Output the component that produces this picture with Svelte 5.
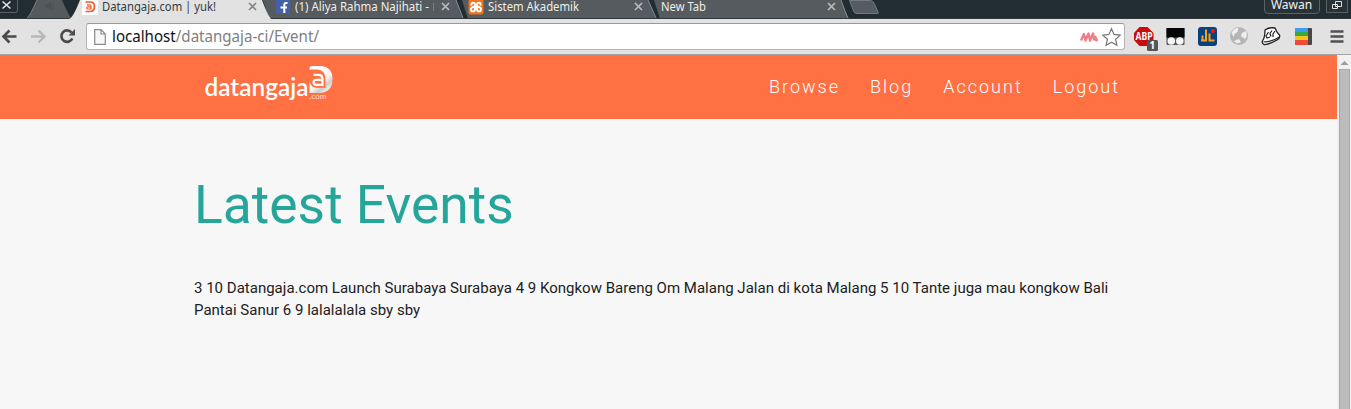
<script>
  const tabs = [
    { title: 'Datangaja.com | yuk!', icon: 'd', active: true, tw: 114 },
    { title: '(1) Aliya Rahma Najihati -', icon: 'f', active: false, tw: 134 },
    { title: 'Sistem Akademik', icon: 'x', active: false, tw: 91 },
    { title: 'New Tab', icon: '', active: false, tw: 45 }
  ];
  const links = ['Browse', 'Blog', 'Account', 'Logout'];
</script>

<div class="window">
  <header class="strip">
    <svg class="shapes" width="1351" height="19" viewBox="0 0 1351 19">
      <rect width="1351" height="19" fill="#222d32" />
      <path d="M-1 12.500H15.500Q17.500 12.500 17.500 10V0" fill="none" stroke="#596267" />
      <path d="M2.500 1.500l8 7m0-7l-8 7" stroke="#e8e8e8" stroke-width="1.500" />
      <path d="M27 18Q30 16 37 0H62Q67 12 71 18Z" fill="#555b5d" />
      <path d="M27 18Q30 16 37 0" fill="none" stroke="#777d80" />
      <path d="M46 5h2l3-3v8l-3-3h-2zM53 3q2 3 0 6" fill="#4d5355" stroke="#4d5355" />
      <path d="M263 0H456L463 19H269Z" fill="#555b5e" />
      <path d="M462 0H648L656 19H468Z" fill="#555b5e" />
      <path d="M654 0H841Q845 12 849 19H660Z" fill="#555b5e" />
      <path d="M456 0l7 18M648 0l8 18M841 0q4 12 7 18" fill="none" stroke="#899093" />
      <path d="M433.500 3v8" stroke="#777d80" />
      <path d="M849.500 .5H870Q873 .5 874 3L878 12Q879 13.500 877 13.500H857Q855 13.500 854 12Z" fill="#555b5e" stroke="#737a7d" />
      <path d="M0 18.500H1351" stroke="#30383b" />
      <path d="M69 19Q73 18 80 0H262Q267 14 271 19Z" fill="#e2e2e2" />
      <path d="M1264.500 0V10Q1264.500 13.500 1268 13.500H1315Q1319.500 13.500 1319.500 10V0" fill="#283237" stroke="#596267" />
      <path d="M1326.500 0V12.500H1347.500V0" fill="#283237" stroke="#596267" />
      <path d="M1335.500 1.500h6v5h-6zM1332.500 4.500h5v4h-5z" fill="none" stroke="#e0e0e0" />
    </svg>
    <div class="tabs">
      {#each tabs as t}
        <div class="tab" class:active={t.active}>
          {#if t.icon === 'd'}
            <svg class="fav" width="16" height="15" viewBox="0 0 16 15">
              <rect width="16" height="15" fill="#fff" />
              <path d="M3.500 2H8Q12.500 2 12.500 6.500Q12.500 11.500 7.500 11.500H3.500" fill="none" stroke="#f0592b" stroke-width="1.700" />
              <path d="M5 4.800H7.500Q9 4.800 9 6.500V9H6.200Q4.800 9 4.800 7.900T6.200 6.900H9" fill="none" stroke="#f0592b" stroke-width="1.200" />
            </svg>
          {:else if t.icon === 'f'}
            <svg class="fav" width="16" height="15" viewBox="0 0 16 15">
              <rect x="1" width="14" height="14" fill="#4560a8" />
              <path d="M12.500 3H11Q9.300 3 9.300 5V13M5.500 7.500H12" fill="none" stroke="#fff" stroke-width="2" />
            </svg>
          {:else if t.icon === 'x'}
            <svg class="fav" width="16" height="15" viewBox="0 0 16 15">
              <rect x=".5" y="-2" width="15" height="16.500" rx="2" fill="#ef7420" />
              <path d="M3.500 5.500Q2.800 2.700 5.200 2.700Q7 2.700 7 5Q7 7 5 7Q3 7.500 3 9.500Q3 11.400 5 11.400Q7 11.400 7 9V7H9V9Q9 11.400 11 11.400Q13 11.400 13 9.500Q13 7.500 11 7Q9 7 9 5Q9 2.700 11 2.700Q13 2.700 12.500 5.500" fill="none" stroke="#fff" stroke-width="1.900" />
            </svg>
          {/if}
          <svg class="label" width="142" height="17"><text x="0" y="11" textLength={t.tw} lengthAdjust="spacingAndGlyphs">{t.title}</text></svg>
          <svg class="close" width="9" height="9" viewBox="0 0 9 9"><path d="M1 1l7 7M8 1l-7 7" /></svg>
        </div>
      {/each}
    </div>
    <div class="user">Wawan</div>
  </header>

  <div class="toolbar">
    <svg width="80" height="35" viewBox="0 0 80 35">
      <path d="M16.500 17.500H4M9.500 11.500l-6 6 6 6" fill="none" stroke="#4b4b4b" stroke-width="2.700" />
      <path d="M31 17.500H44M38.500 11.500l6 6-6 6" fill="none" stroke="#b8b8b8" stroke-width="2.400" />
      <path d="M71.500 13.500A5.700 5.700 0 1 0 72.300 19.500" fill="none" stroke="#4b4b4b" stroke-width="2.700" />
      <path d="M75 10v6.500h-6.500z" fill="#4b4b4b" />
    </svg>
    <div class="address">
      <svg width="12" height="16" viewBox="0 0 12 16"><path d="M.7.7H7L11.300 5V15.300H.7ZM7 .7V5H11.300" fill="#f8f8f8" stroke="#8a8a8a" stroke-width="1.200" /></svg>
      <svg class="url" width="220" height="25"><text x="0" y="18" textLength="207" lengthAdjust="spacingAndGlyphs"><tspan fill="#111">localhost</tspan>/datangaja-ci/Event/</text></svg>
      <svg class="marks" width="42" height="22" viewBox="0 0 42 22">
        <path d="M2 14.500l3-6.500 1.500 6.500 3-7 1.500 7 3-7 1 6 1.500-2.500 .5 3h2" fill="none" stroke="#ee7e87" stroke-width="2.400" stroke-linejoin="round" />
        <path d="M32.500 2.700l2.600 5.700 6.100.7-4.600 4.100 1.300 6.100-5.400-3.100-5.400 3.100 1.300-6.100-4.600-4.100 6.100-.7z" fill="#fff" stroke="#777" stroke-width="1.200" />
      </svg>
    </div>
    <svg class="extensions" width="226" height="35" viewBox="1125 19 226 35">
      <path d="M1139.500 27h8l6 6v7l-6 6h-8l-5.500-6v-7z" fill="#c90b0b" />
      <text x="1135.500" y="40" font-size="10" font-weight="700" fill="#fff" textLength="17" lengthAdjust="spacingAndGlyphs">ABP</text>
      <rect x="1147" y="40" width="11" height="11" rx="1.500" fill="#555" />
      <text x="1149.500" y="49" font-size="10" font-weight="700" fill="#fff">1</text>
      <rect x="1166.500" y="28" width="18" height="17" rx="1" fill="#555" />
      <rect x="1166.500" y="28" width="18" height="9.500" fill="#050505" />
      <circle cx="1171.300" cy="41" r="3.800" fill="#f5f5f5" /><circle cx="1179.800" cy="41" r="3.800" fill="#f5f5f5" />
      <rect x="1198" y="27" width="19" height="19" rx="3" fill="#07427e" />
      <path d="M1202.500 41.500v-6M1206 41.500v-12M1209.500 41.500v-8M1201 40.500h5M1210 40.500h4.500" stroke="#f6a11b" stroke-width="2" />
      <circle cx="1213" cy="31" r="2" fill="#f11" />
      <circle cx="1239" cy="36" r="9" fill="#b6b6b6" />
      <path d="M1231.500 33q2-5 7-5l-1 4-3 2-1 3zM1242 33l4-2q2 5-1 8l-4-3zM1234 41l5-2 2 3-4 1.500z" fill="#eeeeee" />
      <path d="M1265 30Q1269 27 1275 28Q1277 33 1279.500 35Q1280.500 38 1277 40Q1268 45 1264 44.500Q1261 43 1263 40Q1265 37 1265 30Z" fill="#fff" stroke="#222" stroke-width="1.300" />
      <path d="M1268.500 32l-2.500 4 1 2 3-1M1272 30.500l-2 3 1 3M1275 31l-2 3v3M1263.500 42q8 0 16-5" fill="none" stroke="#222" stroke-width="1.200" />
      <rect x="1307" y="28" width="5" height="17" rx="1" fill="#4b4545" />
      <rect x="1295" y="28" width="13" height="5" fill="#3b9cf0" />
      <rect x="1295" y="32" width="13" height="4" fill="#35aa43" />
      <rect x="1295" y="36" width="13" height="4" fill="#f1c51b" />
      <rect x="1295" y="40" width="13" height="5" fill="#ee4b3b" />
      <path d="M1330.500 31.500h13M1330.500 36.500h13M1330.500 41.500h13" stroke="#515151" stroke-width="2.700" />
    </svg>
  </div>

  <div class="view">
    <main>
      <nav>
        <svg class="logo" width="140" height="64" viewBox="0 0 140 64">
          <defs><linearGradient id="sheen" x1=".3" y1="0" x2="1" y2="1"><stop stop-color="#fff" /><stop offset=".5" stop-color="#f7f3f1" /><stop offset=".68" stop-color="#d3cdca" /><stop offset=".9" stop-color="#fff" /></linearGradient></defs>
          <text class="word" x="9.500" y="41" textLength="104" lengthAdjust="spacingAndGlyphs">datangaja</text>
          <path d="M114.500 14.500V13Q114.500 11 117 11H125Q137.500 11.500 137.500 24Q137.500 37.500 124 38H114.500V26Q116 32.500 121 32.800H130.500V23Q130 15 122 14.500Z" fill="url(#sheen)" />
          <path d="M118.500 19.800H123.500Q127.500 19.800 127.500 24V29.800H121.500Q118.500 29.800 118.500 27.300T121.500 24.800H127.500" fill="none" stroke="#fff" stroke-width="2.200" />
          <text class="com" x="114.500" y="44" textLength="17" lengthAdjust="spacingAndGlyphs">.com</text>
        </svg>
        <ul>
          {#each links as l}<li>{l}</li>{/each}
        </ul>
      </nav>
      <section>
        <h1>Latest Events</h1>
        <p>3 10 Datangaja.com Launch Surabaya Surabaya 4 9 Kongkow Bareng Om Malang Jalan di kota Malang 5 10 Tante juga mau kongkow Bali Pantai Sanur 6 9 lalalalala sby sby</p>
      </section>
    </main>
    <aside class="scroll">
      <svg width="14" height="14" viewBox="0 0 14 14"><path d="M3.500 10h8L7.500 6z" fill="#9b9b9b" /></svg>
      <div class="thumb"></div>
    </aside>
  </div>
</div>

<style>
  :global(body) { margin: 0; overflow: hidden; }
  .window { width: 1351px; height: 409px; display: flex; flex-direction: column; overflow: hidden; background: #f7f7f7; font-family: "Noto Sans", sans-serif; }
  .window svg { display: block; flex: none; }
  .strip { position: relative; height: 19px; flex: none; display: flex; }
  .shapes { position: absolute; inset: 0; }
  .tabs { position: relative; display: flex; padding-left: 82px; width: 1264px; box-sizing: border-box; flex: none; }
  .tab { display: flex; box-sizing: border-box; width: 193px; padding-right: 18px; flex: none; }
  .fav { margin-right: 4px; }
  .window .label { margin-right: -10px; font-size: 12px; overflow: visible; }
  .label text { fill: #eeeeec; }
  .active .label text { fill: #333d42; }
  .close { margin: 2px 0 0 auto; }
  .close path { stroke: #b7bbbc; stroke-width: 1.7; }
  .active .close path { stroke: #858585; }
  .user { position: relative; width: 55px; text-align: center; color: #f2f2f2; font-size: 12px; line-height: 17px; margin-top: -4px; }
  .toolbar { height: 35px; flex: none; display: flex; background: #e2e2e2; border-bottom: 1px solid #a4a4a4; }
  .address { box-sizing: border-box; width: 1039px; height: 27px; margin: 4px 0 0 6px; flex: none; display: flex; align-items: center; padding: 0 3px 0 7px; background: #fff; border: 1px solid #b4b4b4; border-top-color: #999; border-radius: 3px; }
  .url { margin-left: 6px; font-size: 16px; }
  .url text { fill: #808080; }
  .marks { margin-left: auto; }
  .view { flex: 1; display: flex; }
  main { width: 1337px; }
  nav { height: 64px; background: #ff7043; display: flex; padding-left: 195px; }
  .logo { font-family: Lato, sans-serif; fill: #fff; }
  .word { font-size: 25px; font-weight: 600; }
  .com { font-size: 8px; opacity: .8; }
  ul { display: flex; gap: 30px; list-style: none; padding: 0; margin: 0 0 0 434px; font: 300 18px/64px Roboto, sans-serif; letter-spacing: 2px; color: #fff; }
  section { padding: 57px 0 0 194px; width: 920px; font-family: Roboto, sans-serif; }
  h1 { margin: 0; color: #26a69a; font-size: 53.4px; line-height: 58.7px; font-weight: 400; }
  p { margin: 42px 0 0; font-size: 15px; line-height: 22.5px; letter-spacing: .01px; color: #212121; }
  .scroll { width: 14px; background: #f1f1f1; }
  .thumb { box-sizing: border-box; width: 11px; height: 340px; margin-left: 2px; background: #bcbcbc; border: 1px solid #a8a8a8; border-bottom: 0; }
</style>
